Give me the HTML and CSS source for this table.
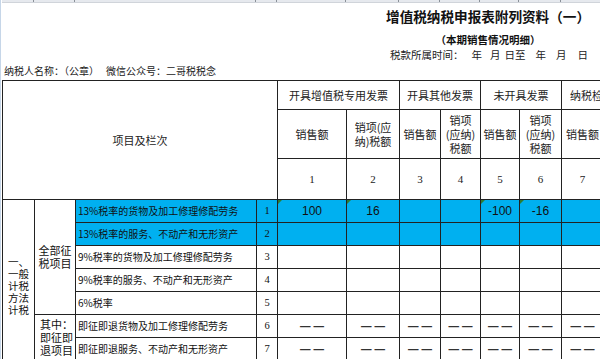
FILE: index.html
```html
<!DOCTYPE html>
<html lang="zh-CN">
<head>
<meta charset="utf-8">
<title>增值税纳税申报表附列资料（一）</title>
<link rel="stylesheet" href="styles.css">
</head>
<body>
<div class="sheet">
  <div class="colbar">
    <span></span><span></span><span></span><span></span><span></span><span></span><span></span><span></span><span></span><span></span><span></span>
  </div>
  <header class="heading">
    <div class="titlebox">
      <h1 class="title">增值税纳税申报表附列资料（一）</h1>
      <p class="subtitle">（本期销售情况明细）</p>
    </div>
    <p class="period">税款所属时间：<span class="g1">年</span><span class="g2">月</span><span class="g3">日至</span><span class="g4">年</span><span class="g5">月</span><span class="g6">日</span></p>
  </header>
  <p class="payer">纳税人名称：（公章）<span class="wx">微信公众号：二哥税税念</span></p>
  <table class="report">
    <colgroup>
      <col class="w-sec"><col class="w-grp"><col class="w-desc"><col class="w-ln">
      <col class="w-c1"><col class="w-c2"><col class="w-c3"><col class="w-c4">
      <col class="w-c5"><col class="w-c6"><col class="w-c7"><col class="w-c8">
    </colgroup>
    <thead>
      <tr class="h-group">
        <th colspan="4" rowspan="3" class="item">项目及栏次</th>
        <th colspan="2">开具增值税专用发票</th>
        <th colspan="2">开具其他发票</th>
        <th colspan="2">未开具发票</th>
        <th colspan="2" class="clip">纳税检查调整</th>
      </tr>
      <tr class="h-sub">
        <th>销售额</th><th>销项(应<br>纳)税额</th>
        <th>销售额</th><th>销项<br>(应纳)<br>税额</th>
        <th>销售额</th><th>销项<br>(应纳)<br>税额</th>
        <th>销售额</th><th>销项<br>(应纳)<br>税额</th>
      </tr>
      <tr class="h-num">
        <th>1</th><th>2</th><th>3</th><th>4</th><th>5</th><th>6</th><th>7</th><th>8</th>
      </tr>
    </thead>
    <tbody>
      <tr class="fill">
        <td rowspan="7" class="sec">一、<br>一般<br>计税<br>方法<br>计税</td>
        <td rowspan="5" class="grp">全部征<br>税项目</td>
        <td class="desc">13%税率的货物及加工修理修配劳务</td>
        <td class="ln">1</td>
        <td class="val mark">100</td><td class="val mark">16</td><td></td><td></td>
        <td class="val mark">-100</td><td class="val mark">-16</td><td></td><td></td>
      </tr>
      <tr class="fill">
        <td class="desc">13%税率的服务、不动产和无形资产</td>
        <td class="ln">2</td>
        <td></td><td></td><td></td><td></td><td></td><td></td><td></td><td></td>
      </tr>
      <tr>
        <td class="desc">9%税率的货物及加工修理修配劳务</td>
        <td class="ln">3</td>
        <td></td><td></td><td></td><td></td><td></td><td></td><td></td><td></td>
      </tr>
      <tr>
        <td class="desc">9%税率的服务、不动产和无形资产</td>
        <td class="ln">4</td>
        <td></td><td></td><td></td><td></td><td></td><td></td><td></td><td></td>
      </tr>
      <tr>
        <td class="desc">6%税率</td>
        <td class="ln">5</td>
        <td></td><td></td><td></td><td></td><td></td><td></td><td></td><td></td>
      </tr>
      <tr>
        <td rowspan="2" class="grp sub">其中：<br>即征即<br>退项目</td>
        <td class="desc">即征即退货物及加工修理修配劳务</td>
        <td class="ln">6</td>
        <td class="dash">—&nbsp;—</td><td class="dash">—&nbsp;—</td><td class="dash">—&nbsp;—</td><td class="dash">—&nbsp;—</td>
        <td class="dash">—&nbsp;—</td><td class="dash">—&nbsp;—</td><td class="dash">—&nbsp;—</td><td class="dash">—&nbsp;—</td>
      </tr>
      <tr>
        <td class="desc">即征即退服务、不动产和无形资产</td>
        <td class="ln">7</td>
        <td class="dash">—&nbsp;—</td><td class="dash">—&nbsp;—</td><td class="dash">—&nbsp;—</td><td class="dash">—&nbsp;—</td>
        <td class="dash">—&nbsp;—</td><td class="dash">—&nbsp;—</td><td class="dash">—&nbsp;—</td><td class="dash">—&nbsp;—</td>
      </tr>
    </tbody>
  </table>
</div>
</body>
</html>
```
FILE: styles.css
```css
html, body {
  margin: 0;
  padding: 0;
  background: #fff;
}
body {
  font-family: "Noto Sans CJK SC", "Noto Sans", sans-serif;
  color: #111;
  overflow: hidden;
}
.sheet {
  width: 600px;
  height: 359px;
  overflow: hidden;
  box-sizing: border-box;
  border-left: 1px solid #c6d6e8;
  padding-left: 1px;
}
.colbar {
  display: grid;
  grid-template-columns: 32px 41px 181px 21px 69px 53px 41px 40px 39px 42px 42px;
  height: 3px;
  background: #e6e9ee;
  border-bottom: 1px solid #d0d4da;
  box-sizing: border-box;
}
.colbar span {
  border-right: 1px solid #8a9098;
}
.heading {
  display: flex;
  flex-direction: column;
  align-items: flex-end;
  padding-right: 10px;
}
.titlebox {
  display: flex;
  flex-direction: column;
  align-items: center;
}
.title {
  margin: 5px 0 0;
  font-size: 13.6px;
  line-height: 17px;
  font-weight: bold;
  color: #111;
}
.subtitle {
  margin: 8px 0 0;
  font-size: 10.5px;
  line-height: 14px;
  font-weight: bold;
}
.period {
  margin: 1px 2px 0 0;
  font-size: 10.5px;
  line-height: 14px;
  color: #222;
}
.period span { margin-left: 8px; }
.period .g3 { margin-left: 4px; }
.period .g4 { margin-left: 10px; }
.period .g5 { margin-left: 10px; }
.period .g6 { margin-left: 11px; }
.payer {
  margin: 2px 0 0 2px;
  font-size: 10px;
  line-height: 14px;
  color: #222;
}
.payer .wx { margin-left: 7px; }

.report {
  margin-top: 2px;
  border-collapse: collapse;
  table-layout: fixed;
  width: 642px;
}
.w-sec { width: 32px; }
.w-grp { width: 41px; }
.w-desc { width: 181px; }
.w-ln { width: 21px; }
.w-c1 { width: 69px; }
.w-c2 { width: 53px; }
.w-c3 { width: 41px; }
.w-c4 { width: 40px; }
.w-c5 { width: 39px; }
.w-c6 { width: 42px; }
.w-c7 { width: 42px; }
.w-c8 { width: 41px; }

.report th, .report td {
  border: 1px solid #222;
  padding: 0;
  vertical-align: middle;
  text-align: center;
  overflow: hidden;
}
.report th {
  font-weight: normal;
  font-size: 11px;
  line-height: 14px;
  color: #222;
}
.h-group { height: 29px; }
.h-sub { height: 49px; }
.h-num { height: 41px; }
.h-group .clip { white-space: nowrap; }
.h-num th {
  font-family: "Liberation Serif", "DejaVu Serif", serif;
  font-size: 11px;
}
.report th.item {
  font-size: 11px;
}
.report tbody tr { height: 23px; }
.report td {
  font-size: 10px;
  line-height: 12px;
  color: #111;
}
.fill > td { background: #00b0f0; }
.fill > td.sec, .fill > td.grp { background: #fff; }
.report td.sec {
  font-size: 10.5px;
  line-height: 12px;
  padding-top: 11px;
}
.report td.grp {
  font-size: 11px;
  line-height: 13px;
}
.report td.grp.sub {
  text-align: left;
  padding-left: 5px;
}
.report td.desc {
  text-align: left;
  padding-left: 2px;
  white-space: nowrap;
}
.report td.ln {
  font-family: "Liberation Serif", "DejaVu Serif", serif;
  font-size: 10.5px;
}
.report td.val {
  font-family: "Liberation Sans", Arial, sans-serif;
  font-size: 12px;
  position: relative;
}
.report td.mark::before {
  content: "";
  position: absolute;
  left: 0;
  top: 0;
  border-top: 4px solid #2e7d32;
  border-right: 4px solid transparent;
}
.report td.dash {
  font-family: "Liberation Sans", Arial, sans-serif;
  font-size: 10.5px;
  font-weight: bold;
  color: #333;
}
```
